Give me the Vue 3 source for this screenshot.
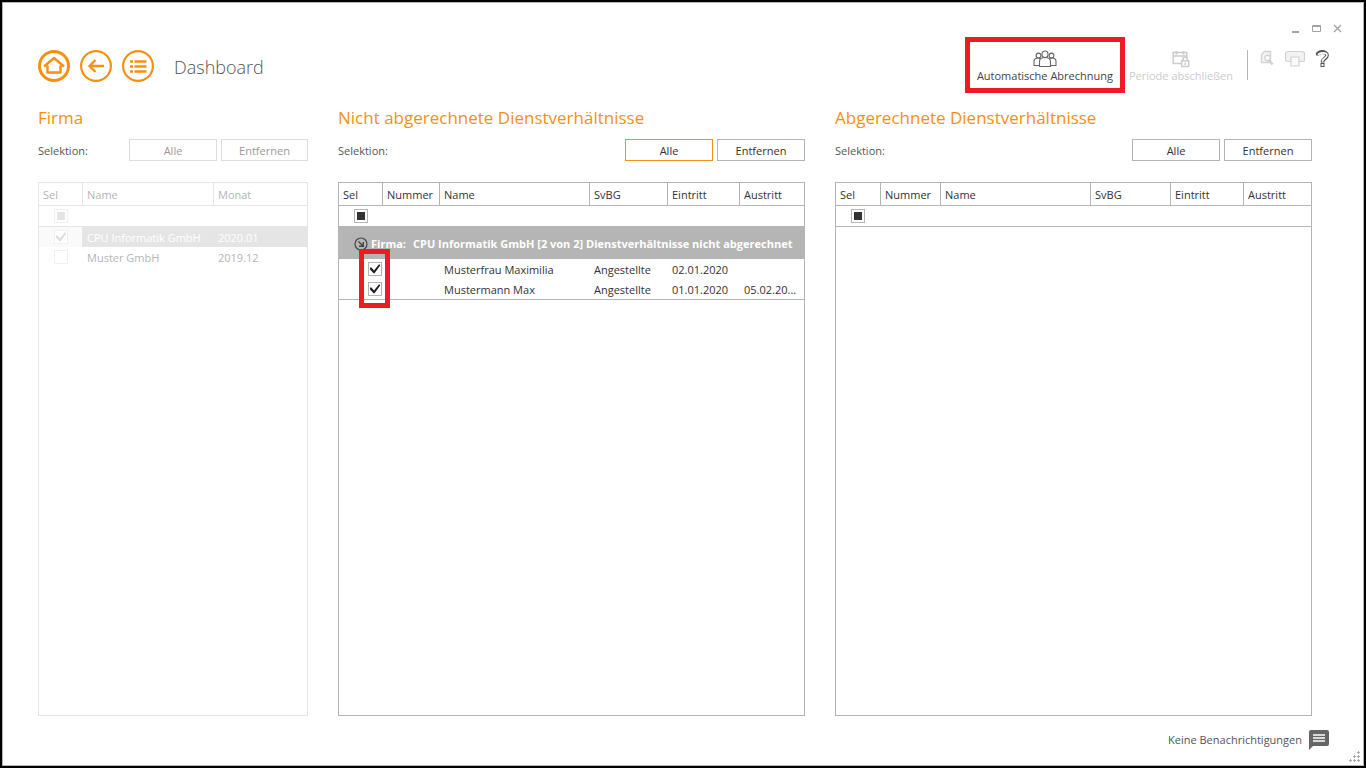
<script setup>
const companies = [
  { name: 'CPU Informatik GmbH', month: '2020.01', selected: true },
  { name: 'Muster GmbH', month: '2019.12', selected: false }
]
const employees = [
  { name: 'Musterfrau Maximilia', group: 'Angestellte', entry: '02.01.2020', exit: '' },
  { name: 'Mustermann Max', group: 'Angestellte', entry: '01.01.2020', exit: '05.02.20...' }
]
</script>

<template>
  <div class="frame">
    <div class="window">
      <div class="controls">
        <button type="button" aria-label="Minimieren">
          <svg width="10" height="10"><path d="M1 8h7" stroke="#a3a3a3" stroke-width="2" /></svg>
        </button>
        <button type="button" aria-label="Maximieren">
          <svg width="10" height="10"><path d="M.5 1.500h8v6h-8zM0 2.500h9" fill="none" stroke="#a3a3a3" /></svg>
        </button>
        <button type="button" aria-label="Schließen">
          <svg width="10" height="10"><path d="M1 1l7 7M8 1l-7 7" stroke="#a3a3a3" stroke-width="1.300" /></svg>
        </button>
      </div>

      <header class="header">
        <nav class="nav">
          <button type="button" aria-label="Startseite">
            <svg width="32" height="32" fill="none" stroke="#f7900f">
              <circle cx="16" cy="16" r="14.500" stroke-width="3" />
              <path d="M9.500 15.500v7h13v-7M6 16.500L16 8l10 8.500" stroke-width="2.400" stroke-linejoin="round" />
            </svg>
          </button>
          <button type="button" aria-label="Zurück">
            <svg width="32" height="32" fill="none" stroke="#f7900f">
              <circle cx="16" cy="16" r="14.900" stroke-width="2.200" />
              <path d="M24 16H10M15.500 10l-6 6 6 6" stroke-width="2.400" />
            </svg>
          </button>
          <button type="button" aria-label="Menü">
            <svg width="32" height="32" fill="none" stroke="#f7900f">
              <circle cx="16" cy="16" r="14.900" stroke-width="2.200" />
              <path d="M8 11.500h3M8 16.500h3M8 21.500h3M12.500 11.500h12M12.500 16.500h12M12.500 21.500h12" stroke-width="2.600" />
            </svg>
          </button>
        </nav>
        <h1>Dashboard</h1>
        <div class="tools">
          <button type="button" class="tool marked">
            <svg width="24" height="18" fill="#fff" stroke="#666" stroke-width="1.100">
              <path d="M1 15.500v-4c0-2 1.500-3.500 4-3.500s3.500 1.500 3.500 3.500v4zM15.500 15.500v-4c0-2 1-3.500 3.500-3.500s4 1.500 4 3.500v4z" />
              <circle cx="5.500" cy="5.500" r="2.400" /><circle cx="18.500" cy="5.500" r="2.400" />
              <path d="M6.500 16.500v-5c0-2.500 1.500-4 5.500-4s5.500 1.500 5.500 4v5z" />
              <ellipse cx="12" cy="4.300" rx="3" ry="3.300" />
            </svg>
            <span>Automatische Abrechnung</span>
          </button>
          <button type="button" class="tool" disabled>
            <svg width="18" height="18" fill="none" stroke="#ccc" stroke-width="1.500">
              <path d="M9 13.500H1.200V2.500h13.600v5M1.200 6h13.600" />
              <path d="M4.500 1v3.500M11.500 1v3.500" stroke-width="2" />
              <path d="M9.700 10.800h7v5.700h-7z" fill="#fff" />
              <path d="M11 10.800V9c0-2.300 4.400-2.300 4.400 0v1.800M13.200 12.500v2.500" />
            </svg>
            <span>Periode abschließen</span>
          </button>
          <div class="quick">
            <button type="button" aria-label="Vorschau" disabled>
              <svg width="14" height="18" fill="#f4f4f4" stroke="#d2d2d2" stroke-width="1.400">
                <path d="M4.500 1.500h6v11h-9v-8z" />
                <circle cx="7.500" cy="8" r="2.800" fill="#fff" />
                <path d="M9.300 10.500l3.200 4" stroke-width="2.600" />
              </svg>
            </button>
            <button type="button" aria-label="Drucken" disabled>
              <svg width="20" height="18" fill="#f2f2f2" stroke="#d2d2d2" stroke-width="1.200">
                <path d="M3 4.500v-3h14v3" />
                <path d="M2.500 1.500h15q2 .5 2 2.500v6q0 1.500-2 1.500h-15q-2 0-2-1.500v-6q0-2 2-2.500z" />
                <path d="M6 7h8v9H6z" fill="#fafafa" />
              </svg>
            </button>
            <button type="button" aria-label="Hilfe">
              <svg width="14" height="18" fill="none">
                <path d="M1.200 5.500C1.500.7 11 1 11 5.200c0 3.200-4.500 3.300-4.500 7.300" stroke="#555" stroke-width="3.800" />
                <path d="M2.200 5C3 2.200 11 2 11 5.200c0 2.800-4.500 3.300-4.500 6.500" stroke="#fff" stroke-width="1.600" />
                <rect x="5" y="13.500" width="3" height="3" fill="#fff" stroke="#555" />
              </svg>
            </button>
          </div>
        </div>
      </header>

      <main class="panels">
        <section class="panel inactive">
          <h2>Firma</h2>
          <div class="bar">
            <span>Selektion:</span>
            <button type="button" disabled>Alle</button>
            <button type="button" disabled>Entfernen</button>
          </div>
          <div class="sheet">
            <table>
              <colgroup><col class="c43"><col><col class="c94"></colgroup>
              <thead>
                <tr><th>Sel</th><th>Name</th><th>Monat</th></tr>
              </thead>
              <tbody>
                <tr class="filter">
                  <td class="tick"><input type="checkbox" class="partial" aria-label="Alle Firmen" disabled></td>
                  <td colspan="2"></td>
                </tr>
                <tr v-for="c in companies" :key="c.name" :class="{ chosen: c.selected }">
                  <td class="tick"><input type="checkbox" :checked="c.selected" :aria-label="c.name" disabled></td>
                  <td>{{ c.name }}</td>
                  <td>{{ c.month }}</td>
                </tr>
              </tbody>
            </table>
          </div>
        </section>

        <section class="panel">
          <h2>Nicht abgerechnete Dienstverhältnisse</h2>
          <div class="bar">
            <span>Selektion:</span>
            <button type="button" class="active">Alle</button>
            <button type="button">Entfernen</button>
          </div>
          <div class="sheet">
            <table>
              <colgroup><col class="c43"><col class="c57"><col><col class="c78"><col class="c72"><col class="c65"></colgroup>
              <thead>
                <tr><th>Sel</th><th>Nummer</th><th>Name</th><th>SvBG</th><th>Eintritt</th><th>Austritt</th></tr>
              </thead>
              <tbody>
                <tr class="filter">
                  <td class="tick"><input type="checkbox" class="partial" aria-label="Alle nicht abgerechneten"></td>
                  <td colspan="5"></td>
                </tr>
                <tr class="group">
                  <td colspan="6">
                    <div class="group-title">
                      <svg width="14" height="14" fill="none" stroke="#444">
                        <circle cx="7" cy="7" r="6" stroke-width="1.200" />
                        <path d="M4.500 4.500l4.500 4.500M9.300 5v4.300H5" stroke-width="1.400" />
                      </svg>
                      <span>Firma:</span>
                      <span>CPU Informatik GmbH [2 von 2] Dienstverhältnisse nicht abgerechnet</span>
                    </div>
                  </td>
                </tr>
                <tr v-for="(e, i) in employees" :key="e.name" class="person">
                  <td class="tick nested">
                    <input type="checkbox" checked :aria-label="e.name">
                    <i v-if="i === 0" class="mark"></i>
                  </td>
                  <td></td>
                  <td>{{ e.name }}</td>
                  <td>{{ e.group }}</td>
                  <td>{{ e.entry }}</td>
                  <td>{{ e.exit }}</td>
                </tr>
              </tbody>
            </table>
          </div>
        </section>

        <section class="panel">
          <h2>Abgerechnete Dienstverhältnisse</h2>
          <div class="bar">
            <span>Selektion:</span>
            <button type="button">Alle</button>
            <button type="button">Entfernen</button>
          </div>
          <div class="sheet">
            <table>
              <colgroup><col class="c44"><col class="c60"><col><col class="c80"><col class="c73"><col class="c68"></colgroup>
              <thead>
                <tr><th>Sel</th><th>Nummer</th><th>Name</th><th>SvBG</th><th>Eintritt</th><th>Austritt</th></tr>
              </thead>
              <tbody>
                <tr class="filter">
                  <td class="tick"><input type="checkbox" class="partial" aria-label="Alle abgerechneten"></td>
                  <td colspan="5"></td>
                </tr>
              </tbody>
            </table>
          </div>
        </section>
      </main>

      <footer class="footer">
        <span>Keine Benachrichtigungen</span>
        <svg width="20" height="20">
          <path d="M2 0h16a2 2 0 0 1 2 2v12a2 2 0 0 1-2 2H4l-4 4V2a2 2 0 0 1 2-2z" fill="#666" />
          <path d="M4 5h12M4 8h12M4 11h12" stroke="#fff" stroke-width="1.600" />
        </svg>
      </footer>
      <svg class="grip" width="12" height="12" stroke="#a9a9a9">
        <path d="M8 1.500h3M9.500 0v3M4 5.500h3M5.500 4v3M8 5.500h3M9.500 4v3M0 9.500h3M1.500 8v3M4 9.500h3M5.500 8v3M8 9.500h3M9.500 8v3" />
      </svg>
    </div>
  </div>
</template>

<style>
body { margin: 0; }
</style>

<style scoped>
* { box-sizing: border-box; }
.frame {
  display: flex;
  min-height: 100vh;
  border: 2px solid #000;
  font: 11px/16px "Open Sans", "Noto Sans", sans-serif;
  color: #333;
}
.window {
  position: relative;
  flex: 1;
  min-width: 0;
  display: flex;
  flex-direction: column;
  border: 1px solid #b5b5b5;
  background: #fff;
}
button { font: inherit; color: inherit; padding: 0; border: 0; background: none; }
svg { display: block; }
.controls {
  display: flex;
  justify-content: flex-end;
  gap: 11px;
  padding: 21px 20px 0 0;
}
.header { display: flex; align-items: flex-start; padding: 16px 33px 0 35px; height: 50px; }
.nav { display: flex; gap: 10px; }
h1 { margin: 0 0 0 20px; font-size: 18px; line-height: 34px; font-weight: 300; color: #555; }
.tools { display: flex; margin-left: auto; }
.tool {
  position: relative;
  display: flex;
  flex-direction: column;
  align-items: center;
  margin-right: 14px;
  color: #444;
  white-space: nowrap;
}
.tool:disabled { color: #ccc; }
.marked { min-width: 142px; margin-right: 13px; }
.marked::after {
  content: "";
  position: absolute;
  inset: -13px -9px -9px;
  border: 5px solid #ed1c24;
}
.quick { display: flex; gap: 11px; align-items: flex-start; height: 30px; padding-left: 12px; border-left: 1px solid #b5b5b5; }
.panels {
  flex: 1;
  display: grid;
  grid-template-columns: 270fr 467fr 477fr;
  gap: 30px;
  padding: 22px 51px 0 35px;
}
.panel { display: flex; flex-direction: column; min-width: 0; }
h2 { margin: 0; font-size: 17px; line-height: 24px; font-weight: 400; color: #f7900f; white-space: nowrap; }
.bar { display: flex; align-items: center; gap: 4px; margin: 9px 0 21px; color: #555; }
.bar span { margin-right: auto; padding-top: 2px; }
.bar button { width: 88px; height: 22px; padding-top: 2px; border: 1px solid #b5b5b5; color: #333; }
.bar button.active { border-color: #f7900f; }
.bar button:disabled { color: #999; border-color: #ddd; }
.inactive .bar button:last-child { width: 87px; }
.sheet { flex: 1; border: 1px solid #b5b5b5; }
table { width: 100%; table-layout: fixed; border-collapse: separate; border-spacing: 0; }
th, td {
  height: 20px;
  padding: 2px 4px 0;
  text-align: left;
  font-weight: 400;
  white-space: nowrap;
  overflow: hidden;
  text-overflow: ellipsis;
}
th { height: 23px; border-bottom: 1px solid #b5b5b5; }
th + th { border-left: 1px solid #b5b5b5; }
td + td { padding-left: 5px; }
.filter td { height: 21px; border-bottom: 1px solid #b5b5b5; }
.c43 { width: 43px; }
.c44 { width: 44px; }
.c57 { width: 57px; }
.c60 { width: 60px; }
.c65 { width: 65px; }
.c68 { width: 68px; }
.c72 { width: 72px; }
.c73 { width: 73px; }
.c78 { width: 78px; }
.c80 { width: 80px; }
.c94 { width: 94px; }
.tick { position: relative; padding: 0 0 0 15px; overflow: visible; }
.tick.nested { padding-left: 29px; }
.person:last-child td { height: 21px; border-bottom: 1px solid #b5b5b5; }
input {
  appearance: none;
  display: block;
  position: relative;
  width: 14px;
  height: 14px;
  margin: 0;
  border: 1px solid #b5b5b5;
  background: #fff;
}
input:checked::before {
  content: "";
  position: absolute;
  inset: 1px;
  background: #222;
  clip-path: polygon(0 35%, 14% 35%, 40% 66%, 88% 5%, 100% 5%, 100% 18%, 46% 92%, 36% 92%, 0 55%);
}
.partial::before { content: ""; position: absolute; inset: 2px; background: #333; }
.group td { height: 32px; padding: 2px 0 0 15px; background: #b5b5b5; color: #fff; font-weight: 700; text-overflow: clip; }
.group-title { display: flex; align-items: center; }
.group-title svg { flex: none; margin-right: 3px; }
.group-title span + span { margin-left: 7px; }
.mark {
  position: absolute;
  z-index: 1;
  top: -10px;
  left: 20px;
  width: 31px;
  height: 59px;
  border: 5px solid #ed1c24;
}
.inactive .sheet, .inactive th, .inactive .filter td { border-color: #e5e5e5; }
.inactive table { color: #b5b5b5; }
.inactive input { border-color: #f0f0f0; }
.inactive input:checked::before { background: #ddd; }
.inactive .partial::before { background: #e5e5e5; }
.inactive .chosen td { background: #e5e5e5; color: #fff; }
.inactive .chosen .tick { background: #fafafa; }
.footer {
  display: flex;
  align-items: center;
  justify-content: flex-end;
  gap: 7px;
  padding: 14px 34px 15px 0;
  color: #555;
}
.grip { position: absolute; right: 2px; bottom: 2px; }
</style>
